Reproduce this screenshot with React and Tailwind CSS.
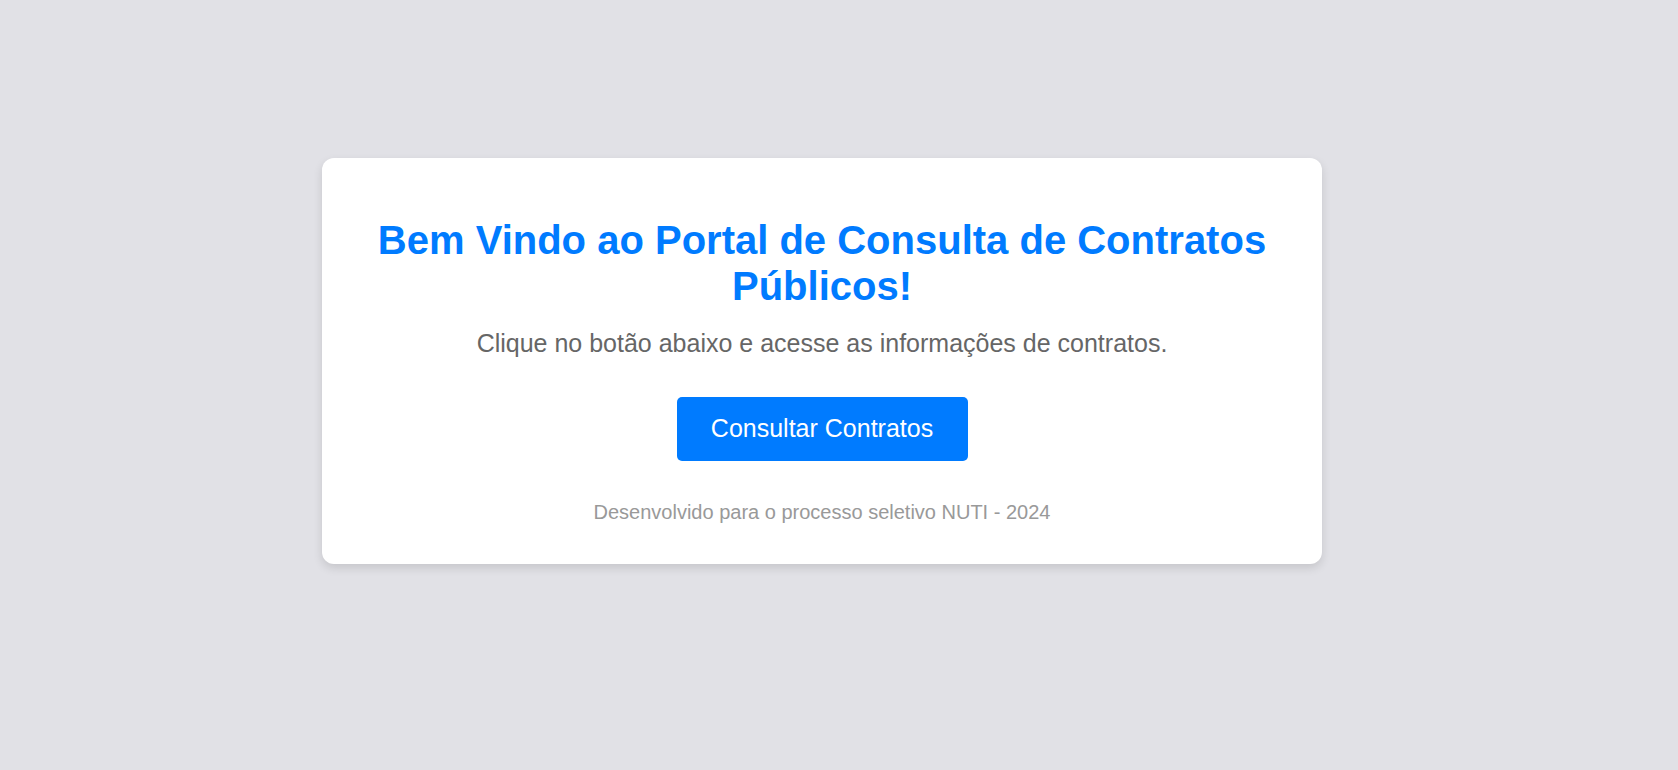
export default function App() {
  return (
    <div
      className="flex h-screen w-full items-center justify-center bg-[#e1e1e6] pr-[34px] pb-[49px]"
      style={{ fontFamily: '"Liberation Sans", Arial, sans-serif' }}
    >
      <div className="flex w-[1000px] flex-col items-center rounded-xl bg-white px-10 pt-[59px] pb-10 text-center shadow-[0_4px_10px_rgba(0,0,0,0.12)]">
        <h1 className="text-[40px] font-bold leading-[46px] text-[#007bff]">
          Bem Vindo ao Portal de Consulta de Contratos Públicos!
        </h1>
        <p className="mt-[20px] text-[25px] leading-[29px] text-[#666666]">
          Clique no botão abaixo e acesse as informações de contratos.
        </p>
        <button className="mt-[39px] h-[64px] w-[291px] rounded-[5px] bg-[#007bff] text-[25px] text-white">
          Consultar Contratos
        </button>
        <p className="mt-[40px] text-[20px] leading-[23px] text-[#999999]">
          Desenvolvido para o processo seletivo NUTI - 2024
        </p>
      </div>
    </div>
  )
}
